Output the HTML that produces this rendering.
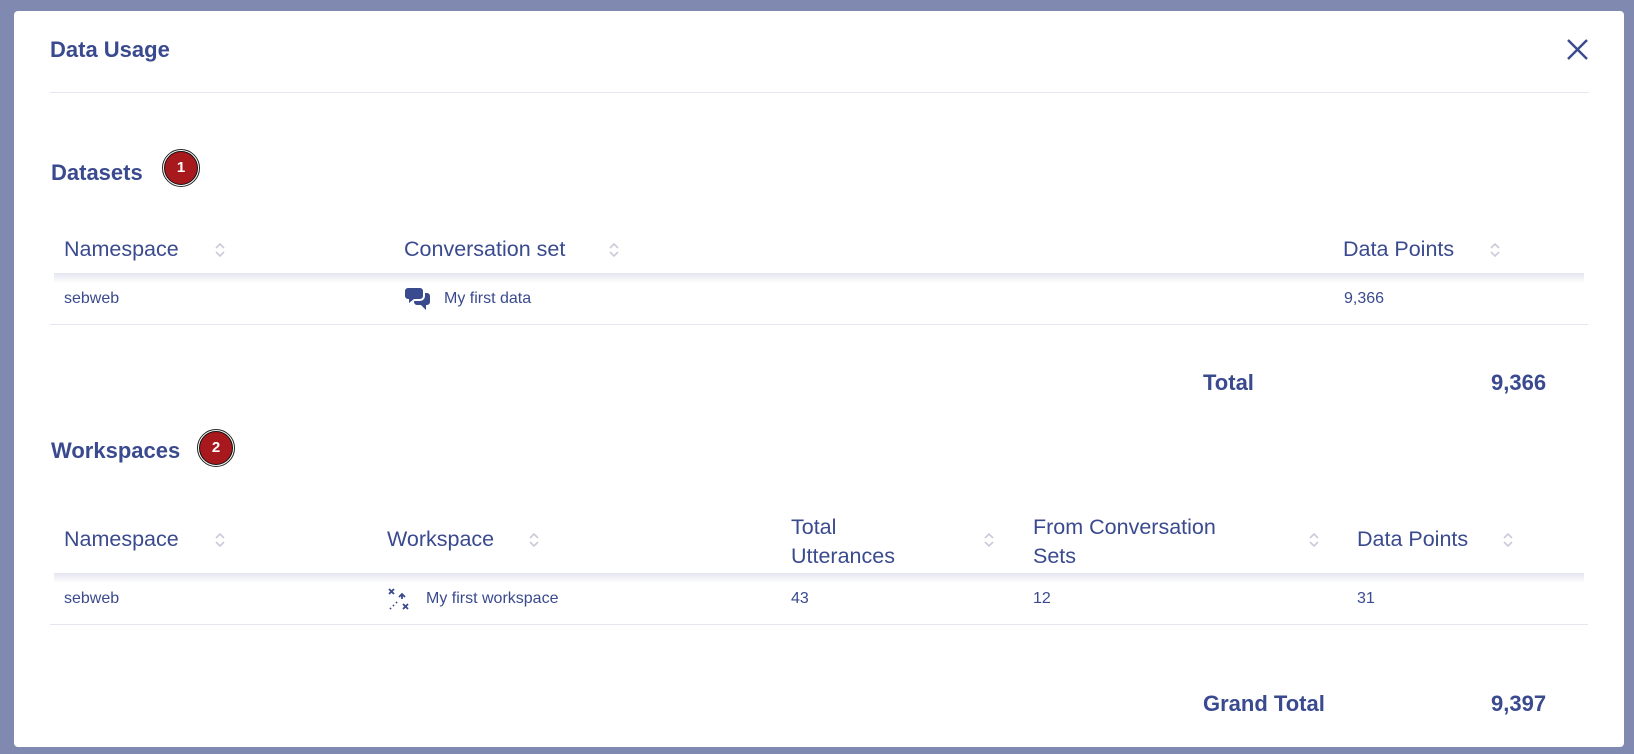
<!DOCTYPE html>
<html><head><meta charset="utf-8"><style>
*{margin:0;padding:0;box-sizing:border-box}
body{width:1634px;height:754px;background:#8089b0;font-family:"Liberation Sans",sans-serif;color:#3a4a8e;position:relative;overflow:hidden}
.modal{position:absolute;left:14px;top:11px;width:1610px;height:736px;background:#fff;border-radius:4px}
.a{position:absolute;white-space:nowrap}
.h{font-weight:bold;font-size:22px}
.th{font-size:21.5px}
.td{font-size:16px}
.line{position:absolute;height:1px;background:#e4e6f3}
.shadow{position:absolute;height:10px;background:linear-gradient(#e4e5f0,rgba(255,255,255,0))}
.badge{position:absolute;width:38px;height:38px;border-radius:50%;background:#fff;border:1px solid #222}
.badge span{position:absolute;left:1px;top:1px;width:34px;height:34px;border-radius:50%;background:#a8191d;border:1px solid #111;color:#fff;font-weight:bold;font-size:15px;text-align:center;line-height:32px}
.sort{position:absolute;width:12px;height:18px}
</style></head><body>
<div class="modal"></div>
<svg width="0" height="0" style="position:absolute"><defs><g id="s"><path d="M2 7 L6 3 L10 7 M2 11 L6 15 L10 11" fill="none" stroke="#c9cbd9" stroke-width="1.6"/></g></defs></svg>

<div class="a h" style="left:50px;top:37px">Data Usage</div>
<svg class="a" style="left:1566px;top:38px" width="23" height="23"><path d="M2 2L21 21M21 2L2 21" stroke="#3a4a8e" stroke-width="2.4"/></svg>
<div class="line" style="left:50px;top:92px;width:1539px"></div>

<div class="a h" style="left:51px;top:160px">Datasets</div>
<div class="badge" style="left:162px;top:149px"><span>1</span></div>

<div class="a th" style="left:64px;top:237px">Namespace</div>
<svg class="sort" style="left:214px;top:241px"><use href="#s"/></svg>
<div class="a th" style="left:404px;top:237px">Conversation set</div>
<svg class="sort" style="left:608px;top:241px"><use href="#s"/></svg>
<div class="a th" style="left:1343px;top:237px">Data Points</div>
<svg class="sort" style="left:1489px;top:241px"><use href="#s"/></svg>
<div class="shadow" style="left:54px;top:273px;width:1530px"></div>
<div class="a td" style="left:64px;top:290px">sebweb</div>
<svg class="a" style="left:405px;top:287px" width="26" height="24" viewBox="0 0 26 24"><path d="M3 1h12a3 3 0 0 1 3 3v5a3 3 0 0 1-3 3H9l-5 4v-4H3a3 3 0 0 1-3-3V4a3 3 0 0 1 3-3z" fill="#3a4a8e"/><path d="M20 6h2a3 3 0 0 1 3 3v6a3 3 0 0 1-3 3h-1v5l-5-5h-4a3 3 0 0 1-3-3v-1h6a5 5 0 0 0 5-5z" fill="#3a4a8e"/></svg>
<div class="a td" style="left:444px;top:290px">My first data</div>
<div class="a td" style="left:1344px;top:290px">9,366</div>
<div class="line" style="left:50px;top:324px;width:1538px"></div>

<div class="a h" style="left:1203px;top:370px">Total</div>
<div class="a h" style="left:1491px;top:370px">9,366</div>

<div class="a h" style="left:51px;top:438px">Workspaces</div>
<div class="badge" style="left:197px;top:429px"><span>2</span></div>

<div class="a th" style="left:64px;top:527px">Namespace</div>
<svg class="sort" style="left:214px;top:531px"><use href="#s"/></svg>
<div class="a th" style="left:387px;top:527px">Workspace</div>
<svg class="sort" style="left:528px;top:531px"><use href="#s"/></svg>
<div class="a th" style="left:791px;top:513px;line-height:29px">Total<br>Utterances</div>
<svg class="sort" style="left:983px;top:531px"><use href="#s"/></svg>
<div class="a th" style="left:1033px;top:513px;line-height:29px">From Conversation<br>Sets</div>
<svg class="sort" style="left:1308px;top:531px"><use href="#s"/></svg>
<div class="a th" style="left:1357px;top:527px">Data Points</div>
<svg class="sort" style="left:1502px;top:531px"><use href="#s"/></svg>
<div class="shadow" style="left:54px;top:573px;width:1530px"></div>
<div class="a td" style="left:64px;top:590px">sebweb</div>
<svg class="a" style="left:387px;top:587px" width="24" height="24" viewBox="0 0 24 24" fill="none" stroke="#3a4a8e" stroke-width="1.8"><path d="M2 2l5 5M7 2l-5 5M16 17l5 5M21 17l-5 5"/><path d="M12 10l3-3 3 3M15 7v5"/><path d="M3 22l1-1M6 19l1-1M9 16l1-1"/></svg>
<div class="a td" style="left:426px;top:590px">My first workspace</div>
<div class="a td" style="left:791px;top:590px">43</div>
<div class="a td" style="left:1033px;top:590px">12</div>
<div class="a td" style="left:1357px;top:590px">31</div>
<div class="line" style="left:50px;top:624px;width:1538px"></div>

<div class="a h" style="left:1203px;top:691px">Grand Total</div>
<div class="a h" style="left:1491px;top:691px">9,397</div>
</body></html>
